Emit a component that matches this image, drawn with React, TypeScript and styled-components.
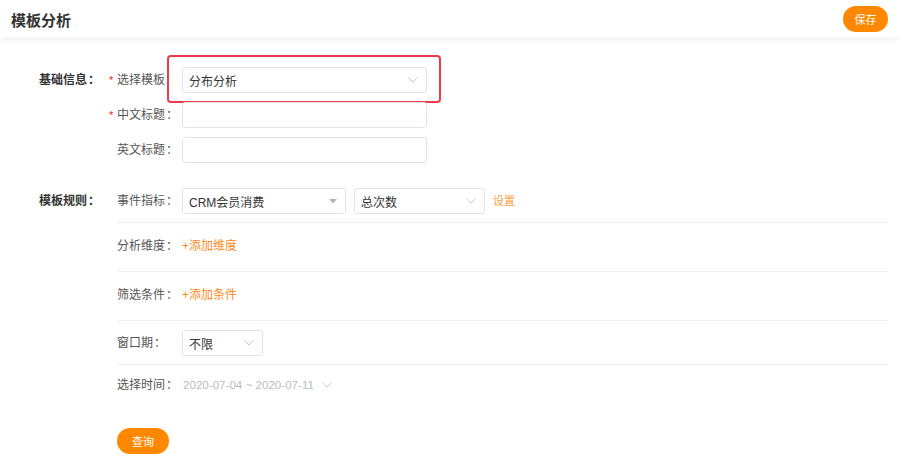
import React from "react";
import styled, { createGlobalStyle } from "styled-components";

const GlobalStyle = createGlobalStyle`
  html, body {
    margin: 0;
    padding: 0;
    background: #fff;
    font-family: "Liberation Sans", "Noto Sans CJK SC", sans-serif;
    color: #333;
  }
  * { box-sizing: border-box; }
`;

const ORANGE = "#ff8800";

const Header = styled.header`
  height: 38px;
  display: flex;
  align-items: center;
  justify-content: space-between;
  padding: 0 11px;
  background: #fff;
  box-shadow: 0 2px 6px rgba(0, 0, 0, 0.07);
  position: relative;
`;

const Title = styled.h1`
  margin: 0;
  font-size: 15px;
  font-weight: 700;
  color: #333;
`;

const PillButton = styled.button<{ $w: number }>`
  width: ${p => p.$w}px;
  height: 26px;
  border: none;
  border-radius: 13px;
  background: ${ORANGE};
  color: #fff;
  font-family: inherit;
  font-size: 11px;
  padding: 0;
  cursor: pointer;
`;

const Form = styled.div`
  padding: 29px 11px 0 39px;
`;

const Group = styled.section<{ $top?: number }>`
  display: flex;
  margin-top: ${p => p.$top || 0}px;
`;

const GroupLabel = styled.div<{ $pt?: number }>`
  width: 78px;
  flex: none;
  font-size: 12px;
  font-weight: 700;
  line-height: 26px;
  padding-top: ${p => p.$pt || 0}px;
  white-space: nowrap;
`;

const Column = styled.div<{ $gap?: number }>`
  flex: 1;
  display: flex;
  flex-direction: column;
  gap: ${p => p.$gap || 0}px;
`;

const Row = styled.div`
  display: flex;
  align-items: center;
  height: 26px;
`;

const RuleRow = styled.div<{ $pt: number; $pb: number; $line?: boolean }>`
  display: flex;
  align-items: center;
  padding: ${p => p.$pt}px 0 ${p => p.$pb}px;
  border-bottom: ${p => (p.$line ? "1px solid #eeeff3" : "none")};
  min-height: 26px;
`;

const Label = styled.div`
  width: 65px;
  flex: none;
  font-size: 12px;
  color: #555;
  line-height: 26px;
  white-space: nowrap;
`;

const Colon = styled.span<{ $hidden?: boolean }>`
  margin-left: 1px;
  color: ${p => (p.$hidden ? "transparent" : "inherit")};
`;

const Star = styled.span`
  color: #f5222d;
  margin-left: -8px;
  display: inline-block;
  width: 8px;
  font-size: 11px;
`;

const Box = styled.div<{ $w: number }>`
  width: ${p => p.$w}px;
  height: 26px;
  border: 1px solid #e3e4eb;
  border-radius: 3px;
  background: #fff;
  display: flex;
  align-items: center;
  justify-content: space-between;
  padding: 0 8px 0 6px;
  font-size: 12px;
  color: #333;
  position: relative;
`;

const Highlight = styled.div`
  position: relative;
  &::before {
    content: "";
    position: absolute;
    top: -12px;
    bottom: -10px;
    left: -15px;
    right: -14px;
    border: 2px solid #ef3a4c;
    border-radius: 4px;
    pointer-events: none;
  }
`;

const Controls = styled.div`
  display: flex;
  align-items: center;
  gap: 8px;
`;

const Link = styled.span<{ $small?: boolean }>`
  color: ${p => (p.$small ? "#ffa040" : "#ff8a1a")};
  font-size: ${p => (p.$small ? 11 : 12)}px;
  line-height: 26px;
  cursor: pointer;
`;

const DateText = styled.div`
  display: flex;
  align-items: center;
  gap: 8px;
  font-size: 11.6px;
  color: #b8bcc6;
  line-height: 26px;
  padding-left: 1px;
`;

const QueryWrap = styled.div`
  padding: 30px 0 0 78px;
`;

const Chevron = () => (
  <svg width="10" height="6" viewBox="0 0 10 6" fill="none">
    <path d="M0.5 0.5 L5 5 L9.5 0.5" stroke="#c4c7cf" strokeWidth="1" />
  </svg>
);

const Caret = () => (
  <svg width="8" height="5" viewBox="0 0 8 5">
    <path d="M0 0 H8 L4 4.5 Z" fill="#b4b7bf" />
  </svg>
);

const FieldLabel: React.FC<{ text: string; required?: boolean; noColon?: boolean }> = ({
  text,
  required,
  noColon
}) => (
  <Label>
    {required && <Star>*</Star>}
    {text}
    <Colon $hidden={noColon}>：</Colon>
  </Label>
);

const App: React.FC = () => (
  <>
    <GlobalStyle />
    <Header>
      <Title>模板分析</Title>
      <PillButton $w={45}>保存</PillButton>
    </Header>
    <Form>
      <Group>
        <GroupLabel>
          基础信息<Colon>：</Colon>
        </GroupLabel>
        <Column $gap={9}>
          <Row>
            <FieldLabel text="选择模板" required noColon />
            <Highlight>
              <Box $w={245}>
                <span>分布分析</span>
                <Chevron />
              </Box>
            </Highlight>
          </Row>
          <Row>
            <FieldLabel text="中文标题" required />
            <Box $w={245} />
          </Row>
          <Row>
            <FieldLabel text="英文标题" />
            <Box $w={245} />
          </Row>
        </Column>
      </Group>
      <Group $top={15}>
        <GroupLabel $pt={10}>
          模板规则<Colon>：</Colon>
        </GroupLabel>
        <Column>
          <RuleRow $pt={10} $pb={8} $line>
            <FieldLabel text="事件指标" />
            <Controls>
              <Box $w={164}>
                <span>CRM会员消费</span>
                <Caret />
              </Box>
              <Box $w={131}>
                <span>总次数</span>
                <Chevron />
              </Box>
              <Link $small>设置</Link>
            </Controls>
          </RuleRow>
          <RuleRow $pt={10} $pb={12} $line>
            <FieldLabel text="分析维度" />
            <Link>+添加维度</Link>
          </RuleRow>
          <RuleRow $pt={10} $pb={12} $line>
            <FieldLabel text="筛选条件" />
            <Link>+添加条件</Link>
          </RuleRow>
          <RuleRow $pt={9} $pb={8} $line>
            <FieldLabel text="窗口期" />
            <Box $w={81}>
              <span>不限</span>
              <Chevron />
            </Box>
          </RuleRow>
          <RuleRow $pt={7} $pb={0}>
            <FieldLabel text="选择时间" />
            <DateText>
              <span>2020-07-04 ~ 2020-07-11</span>
              <Chevron />
            </DateText>
          </RuleRow>
        </Column>
      </Group>
      <QueryWrap>
        <PillButton $w={52}>查询</PillButton>
      </QueryWrap>
    </Form>
  </>
);

export default App;
